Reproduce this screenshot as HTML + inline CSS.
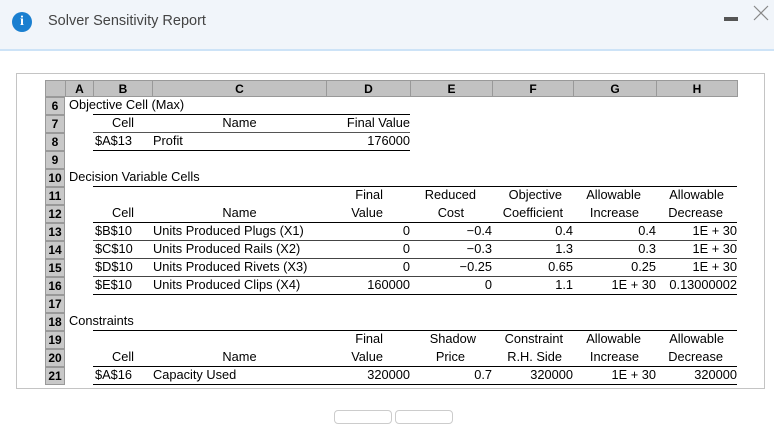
<!DOCTYPE html>
<html><head><meta charset="utf-8"><style>
body{margin:0;width:774px;height:417px;background:#fff;position:relative;overflow:hidden;font-family:"Liberation Sans",Arial,sans-serif;}
.hdr{position:absolute;left:0;top:0;width:774px;height:49px;background:#f1f5fa;border-bottom:2px solid #cde3f7;}
.ic{position:absolute;left:12px;top:12px;width:20px;height:20px;border-radius:50%;background:#1a7fd0;color:#fff;font:bold 14px "Liberation Serif",serif;text-align:center;line-height:20px;}
.ttl{position:absolute;left:48px;top:13px;font-size:14.5px;color:#444;}
.box{position:absolute;left:16px;top:73px;width:749px;height:316px;border:1px solid #c4c4c4;box-sizing:border-box;}
.ch{position:absolute;top:80px;height:17px;background:#c2c2c2;border:1px solid #999;box-sizing:border-box;font-weight:bold;font-size:12px;text-align:center;line-height:16px;}
.rn{position:absolute;left:45px;width:20px;height:18px;background:#c8c8c8;border:1px solid #999;box-sizing:border-box;font-weight:bold;font-size:12px;text-align:center;line-height:17px;}
.t{position:absolute;font-size:12.8px;line-height:18px;color:#000;white-space:nowrap;}
.r{text-align:right}.c{text-align:center}
.ln{position:absolute;left:93px;width:644px;height:1px;background:#000;}
.btn{position:absolute;top:410px;width:56px;height:12px;border:1px solid #ccc;border-radius:4px;}
</style></head><body>
<div class="hdr"><div class="ic">i</div><div class="ttl">Solver Sensitivity Report</div>
<div style="position:absolute;left:724px;top:17px;width:14px;height:4px;background:#555"></div>
<svg style="position:absolute;left:753px;top:5px" width="16" height="16"><path d="M1 1L15 15M15 1L1 15" stroke="#888" stroke-width="1.2"/></svg></div>
<div class="box"></div>
<div class="ch" style="left:45px;width:21px"></div>
<div class="ch" style="left:65px;width:29px">A</div>
<div class="ch" style="left:93px;width:60px">B</div>
<div class="ch" style="left:152px;width:175px">C</div>
<div class="ch" style="left:326px;width:85px">D</div>
<div class="ch" style="left:410px;width:83px">E</div>
<div class="ch" style="left:492px;width:82px">F</div>
<div class="ch" style="left:573px;width:84px">G</div>
<div class="ch" style="left:656px;width:82px">H</div>

<div class="rn" style="top:97px">6</div><div class="rn" style="top:115px">7</div><div class="rn" style="top:133px">8</div><div class="rn" style="top:151px">9</div>
<div class="rn" style="top:169px">10</div><div class="rn" style="top:187px">11</div><div class="rn" style="top:205px">12</div><div class="rn" style="top:223px">13</div>
<div class="rn" style="top:241px">14</div><div class="rn" style="top:259px">15</div><div class="rn" style="top:277px">16</div><div class="rn" style="top:295px">17</div>
<div class="rn" style="top:313px">18</div><div class="rn" style="top:331px">19</div><div class="rn" style="top:349px">20</div><div class="rn" style="top:367px">21</div>

<div class="t" style="left:69px;top:96px">Objective Cell (Max)</div>
<div class="ln" style="top:114px;width:317px"></div>
<div class="t c" style="left:93px;width:60px;top:114px">Cell</div>
<div class="t c" style="left:152px;width:175px;top:114px">Name</div>
<div class="t r" style="left:326px;width:84px;top:114px">Final Value</div>
<div class="ln" style="top:132px;width:317px;background:#555"></div>
<div class="t" style="left:95px;top:132px">$A$13</div>
<div class="t" style="left:153px;top:132px">Profit</div>
<div class="t r" style="left:326px;width:84px;top:132px">176000</div>
<div class="ln" style="top:150px;width:317px"></div>

<div class="t" style="left:69px;top:168px">Decision Variable Cells</div>
<div class="ln" style="top:186px"></div>
<div class="t r" style="left:326px;width:57px;top:186px">Final</div>
<div class="t r" style="left:410px;width:66px;top:186px">Reduced</div>
<div class="t r" style="left:492px;width:70px;top:186px">Objective</div>
<div class="t r" style="left:573px;width:68px;top:186px">Allowable</div>
<div class="t r" style="left:656px;width:68px;top:186px">Allowable</div>
<div class="t c" style="left:93px;width:60px;top:204px">Cell</div>
<div class="t c" style="left:152px;width:175px;top:204px">Name</div>
<div class="t r" style="left:326px;width:57px;top:204px">Value</div>
<div class="t r" style="left:410px;width:54px;top:204px">Cost</div>
<div class="t r" style="left:492px;width:71px;top:204px">Coefficient</div>
<div class="t r" style="left:573px;width:66px;top:204px">Increase</div>
<div class="t r" style="left:656px;width:67px;top:204px">Decrease</div>
<div class="ln" style="top:222px"></div>
<div class="t" style="left:95px;top:222px">$B$10</div><div class="t" style="left:153px;top:222px">Units Produced Plugs (X1)</div>
<div class="t r" style="left:326px;width:84px;top:222px">0</div><div class="t r" style="left:410px;width:82px;top:222px">&#8722;0.4</div><div class="t r" style="left:492px;width:81px;top:222px">0.4</div><div class="t r" style="left:573px;width:83px;top:222px">0.4</div><div class="t r" style="left:656px;width:81px;top:222px">1E + 30</div>
<div class="ln" style="top:240px;background:#444"></div>
<div class="t" style="left:95px;top:240px">$C$10</div><div class="t" style="left:153px;top:240px">Units Produced Rails (X2)</div>
<div class="t r" style="left:326px;width:84px;top:240px">0</div><div class="t r" style="left:410px;width:82px;top:240px">&#8722;0.3</div><div class="t r" style="left:492px;width:81px;top:240px">1.3</div><div class="t r" style="left:573px;width:83px;top:240px">0.3</div><div class="t r" style="left:656px;width:81px;top:240px">1E + 30</div>
<div class="ln" style="top:258px;background:#444"></div>
<div class="t" style="left:95px;top:258px">$D$10</div><div class="t" style="left:153px;top:258px">Units Produced Rivets (X3)</div>
<div class="t r" style="left:326px;width:84px;top:258px">0</div><div class="t r" style="left:410px;width:82px;top:258px">&#8722;0.25</div><div class="t r" style="left:492px;width:81px;top:258px">0.65</div><div class="t r" style="left:573px;width:83px;top:258px">0.25</div><div class="t r" style="left:656px;width:81px;top:258px">1E + 30</div>
<div class="ln" style="top:276px;background:#444"></div>
<div class="t" style="left:95px;top:276px">$E$10</div><div class="t" style="left:153px;top:276px">Units Produced Clips (X4)</div>
<div class="t r" style="left:326px;width:84px;top:276px">160000</div><div class="t r" style="left:410px;width:82px;top:276px">0</div><div class="t r" style="left:492px;width:81px;top:276px">1.1</div><div class="t r" style="left:573px;width:83px;top:276px">1E + 30</div><div class="t r" style="left:656px;width:81px;top:276px">0.13000002</div>
<div class="ln" style="top:294px"></div>

<div class="t" style="left:69px;top:312px">Constraints</div>
<div class="ln" style="top:330px"></div>
<div class="t r" style="left:326px;width:57px;top:330px">Final</div>
<div class="t r" style="left:410px;width:66px;top:330px">Shadow</div>
<div class="t r" style="left:492px;width:71px;top:330px">Constraint</div>
<div class="t r" style="left:573px;width:68px;top:330px">Allowable</div>
<div class="t r" style="left:656px;width:68px;top:330px">Allowable</div>
<div class="t c" style="left:93px;width:60px;top:348px">Cell</div>
<div class="t c" style="left:152px;width:175px;top:348px">Name</div>
<div class="t r" style="left:326px;width:57px;top:348px">Value</div>
<div class="t r" style="left:410px;width:55px;top:348px">Price</div>
<div class="t r" style="left:492px;width:70px;top:348px">R.H. Side</div>
<div class="t r" style="left:573px;width:66px;top:348px">Increase</div>
<div class="t r" style="left:656px;width:67px;top:348px">Decrease</div>
<div class="ln" style="top:366px"></div>
<div class="t" style="left:95px;top:366px">$A$16</div><div class="t" style="left:153px;top:366px">Capacity Used</div>
<div class="t r" style="left:326px;width:84px;top:366px">320000</div><div class="t r" style="left:410px;width:82px;top:366px">0.7</div><div class="t r" style="left:492px;width:81px;top:366px">320000</div><div class="t r" style="left:573px;width:83px;top:366px">1E + 30</div><div class="t r" style="left:656px;width:81px;top:366px">320000</div>
<div class="ln" style="top:384px"></div>

<div class="btn" style="left:334px"></div><div class="btn" style="left:395px"></div>
</body></html>
